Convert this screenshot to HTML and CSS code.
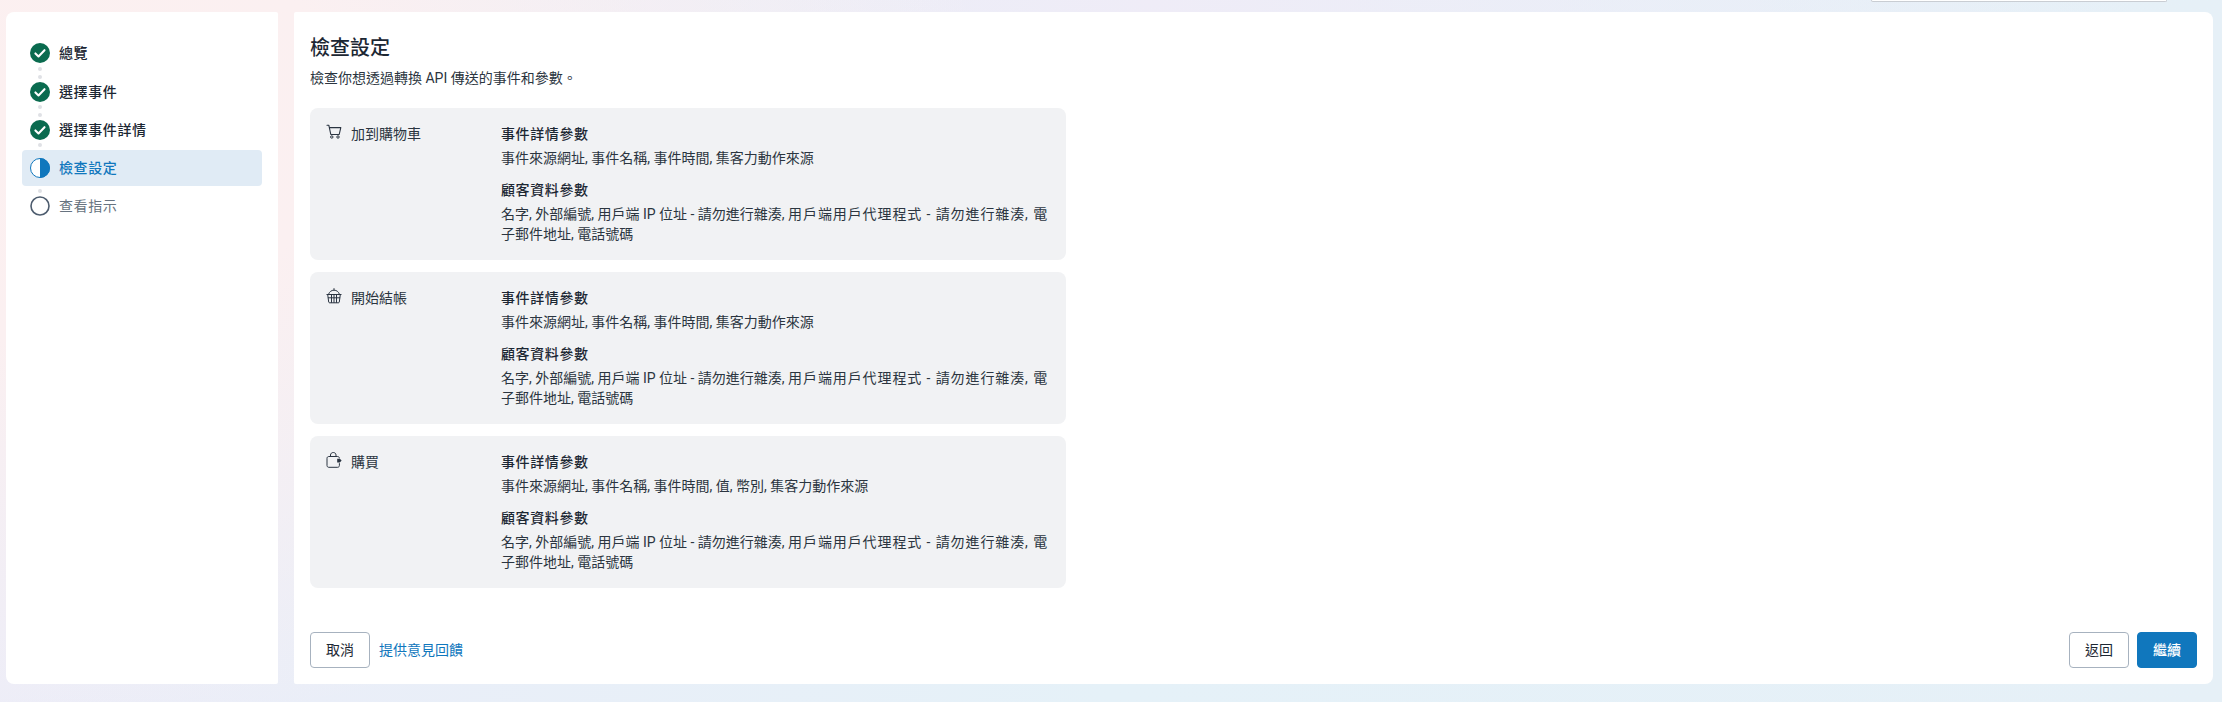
FILE: index.html
```html
<!DOCTYPE html>
<html lang="zh-Hant">
<head>
<meta charset="utf-8">
<title>檢查設定</title>
<link rel="stylesheet" href="styles.css">
</head>
<body>
<div class="topbar"><div class="topfield"></div></div>
<div class="shell">
  <nav class="side">
    <div class="step done">
      <svg class="sicon" viewBox="0 0 20 20"><circle cx="10" cy="10" r="10" fill="#0a6b4f"/><path d="M5.4 10.4l3.1 3 6-6.2" fill="none" stroke="#fff" stroke-width="2.1" stroke-linecap="round" stroke-linejoin="round"/></svg>
      <span>總覽</span>
    </div>
    <div class="dots tall"><i></i><i></i></div>
    <div class="step done">
      <svg class="sicon" viewBox="0 0 20 20"><circle cx="10" cy="10" r="10" fill="#0a6b4f"/><path d="M5.4 10.4l3.1 3 6-6.2" fill="none" stroke="#fff" stroke-width="2.1" stroke-linecap="round" stroke-linejoin="round"/></svg>
      <span>選擇事件</span>
    </div>
    <div class="dots"><i></i><i></i></div>
    <div class="step done">
      <svg class="sicon" viewBox="0 0 20 20"><circle cx="10" cy="10" r="10" fill="#0a6b4f"/><path d="M5.4 10.4l3.1 3 6-6.2" fill="none" stroke="#fff" stroke-width="2.1" stroke-linecap="round" stroke-linejoin="round"/></svg>
      <span>選擇事件詳情</span>
    </div>
    <div class="dots single"><i></i></div>
    <div class="step active">
      <svg class="sicon" viewBox="0 0 20 20"><circle cx="10" cy="10" r="9.500" fill="#fff" stroke="#1077bd"/><path d="M10 0a10 10 0 0 1 0 20z" fill="#1077bd"/></svg>
      <span>檢查設定</span>
    </div>
    <div class="dots single"><i></i></div>
    <div class="step todo">
      <svg class="sicon" viewBox="0 0 20 20"><circle cx="10" cy="10" r="9" fill="#fff" stroke="#4d5c6e" stroke-width="1.600"/></svg>
      <span>查看指示</span>
    </div>
  </nav>
  <main class="main">
    <h1 class="title">檢查設定</h1>
    <p class="sub">檢查你想透過轉換 API 傳送的事件和參數。</p>
    <div class="cards">
      <section class="card">
        <div class="event">
          <svg class="eicon" viewBox="0 0 16 16"><path d="M1 1.200h1.800l2 9.300h8.400l1.600-6.900H3.300" fill="none" stroke="#2a3441" stroke-width="1.100" stroke-linejoin="round" stroke-linecap="round"/><circle cx="5.800" cy="13" r="1.200" fill="none" stroke="#2a3441"/><circle cx="12" cy="13" r="1.200" fill="none" stroke="#2a3441"/></svg>
          <span>加到購物車</span>
        </div>
        <div class="params">
          <h3>事件詳情參數</h3>
          <p>事件來源網址, 事件名稱, 事件時間, 集客力動作來源</p>
          <h3 class="second">顧客資料參數</h3>
          <p>名字, 外部編號, 用戶端 IP 位址 - 請勿進行雜湊, <span class="ua">用戶端用戶代理程式 - 請勿進行雜湊, 電</span>子郵件地址, 電話號碼</p>
        </div>
      </section>
      <section class="card">
        <div class="event">
          <svg class="eicon" viewBox="0 0 16 16"><path d="M8 .2v2M2.600 6.200C3.400 3.800 5.400 2.200 8 2.200s4.600 1.600 5.400 4" fill="none" stroke="#2a3441"/><path d="M.5 6.500h15M1.700 6.500l1 7.500c.1.500.4.800.9.800h8.800c.5 0 .8-.3.900-.8l1-7.500M1.900 9.800h12.200M5.500 6.500v8.300M10.500 6.500v8.300M8 6.500v8.300" fill="none" stroke="#2a3441"/></svg>
          <span>開始結帳</span>
        </div>
        <div class="params">
          <h3>事件詳情參數</h3>
          <p>事件來源網址, 事件名稱, 事件時間, 集客力動作來源</p>
          <h3 class="second">顧客資料參數</h3>
          <p>名字, 外部編號, 用戶端 IP 位址 - 請勿進行雜湊, <span class="ua">用戶端用戶代理程式 - 請勿進行雜湊, 電</span>子郵件地址, 電話號碼</p>
        </div>
      </section>
      <section class="card">
        <div class="event">
          <svg class="eicon" viewBox="0 0 16 16"><path d="M4.500 4.500V3C4.500 1.500 5.800.5 7.300.5S10 1.500 10 3v1.500" fill="none" stroke="#2a3441"/><path d="M1 6.300c0-1 .7-1.800 1.700-1.800h9c1 0 1.700.8 1.700 1.800M1 6.300v7.200c0 1 .7 1.800 1.700 1.800h9c1 0 1.700-.8 1.700-1.800v-2.300" fill="none" stroke="#2a3441"/><path d="M11.200 6.700h2.700l1.700 1.900-1.700 1.900h-2.700z" fill="#2a3441"/></svg>
          <span>購買</span>
        </div>
        <div class="params">
          <h3>事件詳情參數</h3>
          <p>事件來源網址, 事件名稱, 事件時間, 值, 幣別, 集客力動作來源</p>
          <h3 class="second">顧客資料參數</h3>
          <p>名字, 外部編號, 用戶端 IP 位址 - 請勿進行雜湊, <span class="ua">用戶端用戶代理程式 - 請勿進行雜湊, 電</span>子郵件地址, 電話號碼</p>
        </div>
      </section>
    </div>
    <footer class="foot">
      <div class="foot-group">
        <button class="btn">取消</button>
        <a class="link" href="#">提供意見回饋</a>
      </div>
      <div class="foot-group right">
        <button class="btn">返回</button>
        <button class="btn primary">繼續</button>
      </div>
    </footer>
  </main>
</div>
</body>
</html>
```
FILE: styles.css
```css
* { box-sizing: border-box; }
html, body { margin: 0; height: 100%; }
body {
  width: 2222px;
  height: 702px;
  overflow: hidden;
  font-family: Roboto, "Noto Sans CJK TC", sans-serif;
  font-size: 14px;
  line-height: 20px;
  color: #1c2733;
  background:
    radial-gradient(ellipse 1000px 620px at 0 120px, #fcf0f0 0%, #fbf0f1 35%, rgba(251,239,240,0) 100%),
    radial-gradient(ellipse 1000px 520px at 1150px 0, #efecf7 0%, rgba(239,236,247,0) 100%),
    linear-gradient(90deg, #ecedf8 0%, #e5f1f8 50%, #e6f0f7 100%);
}
.topbar { height: 12px; display: flex; justify-content: flex-end; padding-right: 55px; }
.topfield {
  width: 296px; height: 2px;
  background: #fff;
  border: 1px solid #c9cdd3;
  border-top: 0;
  border-radius: 0 0 2px 2px;
}
.shell { display: flex; height: 672px; padding: 0 9px 0 6px; gap: 16px; }
.side {
  width: 272px;
  flex: none;
  background: #fff;
  border-radius: 8px 2px 2px 8px;
  padding: 31px 16px 0;
}
.step {
  display: flex;
  align-items: center;
  gap: 9px;
  height: 20px;
  padding-left: 8px;
  font-size: 14px;
  color: #1c2733;
  border-radius: 4px;
}
.sicon { width: 20px; height: 20px; flex: none; }
.step.done span { font-weight: 500; letter-spacing: .6px; }
.step.active {
  height: 36px;
  background: #e0ebf5;
  color: #1077bd;
  font-weight: 500;
  letter-spacing: .6px;
}
.step.todo { color: #677380; letter-spacing: .6px; }
.dots { height: 18px; width: 4px; margin-left: 16px; padding-top: 3px; display: flex; flex-direction: column; gap: 4px; }
.dots.tall { height: 19px; padding-top: 4px; }
.dots.single { height: 10px; }
.dots i { width: 4px; height: 4px; border-radius: 50%; background: #dfe1e5; flex: none; }
.main {
  flex: 1;
  background: #fff;
  border-radius: 2px 8px 8px 2px;
  padding: 22px 16px 16px;
  display: flex;
  flex-direction: column;
}
.title { margin: 0; font-size: 20px; line-height: 28px; font-weight: 500; color: #1c2733; }
.sub { margin: 6px 0 0; line-height: 20px; color: #2b3540; }
.cards { margin-top: 20px; display: flex; flex-direction: column; gap: 12px; width: 756px; }
.card {
  height: 152px;
  background: #f1f2f4;
  border-radius: 8px;
  padding: 16px;
  display: grid;
  grid-template-columns: 175px 1fr;
}
.event { display: flex; gap: 9px; align-items: flex-start; color: #2b3540; }
.eicon { width: 16px; height: 16px; flex: none; }
.params { color: #2b3540; }
.params h3 { margin: 0; font-size: 14px; line-height: 20px; font-weight: 500; color: #1c2733; letter-spacing: .6px; }
.params p { margin: 4px 0 0; }
.params .second { margin-top: 12px; }
.ua { letter-spacing: .9px; }
.foot { margin-top: auto; display: flex; justify-content: space-between; }
.foot-group { display: flex; align-items: center; gap: 9px; }
.foot-group.right { gap: 8px; }
.btn {
  width: 60px; height: 36px;
  background: #fff;
  border: 1px solid #a7b2bf;
  border-radius: 4px;
  font: inherit;
  color: #1c2733;
  padding: 0;
}
.btn.primary { background: #1077bd; border-color: #1077bd; color: #fff; font-weight: 500; }
.link { color: #1077bd; text-decoration: none; }
```
